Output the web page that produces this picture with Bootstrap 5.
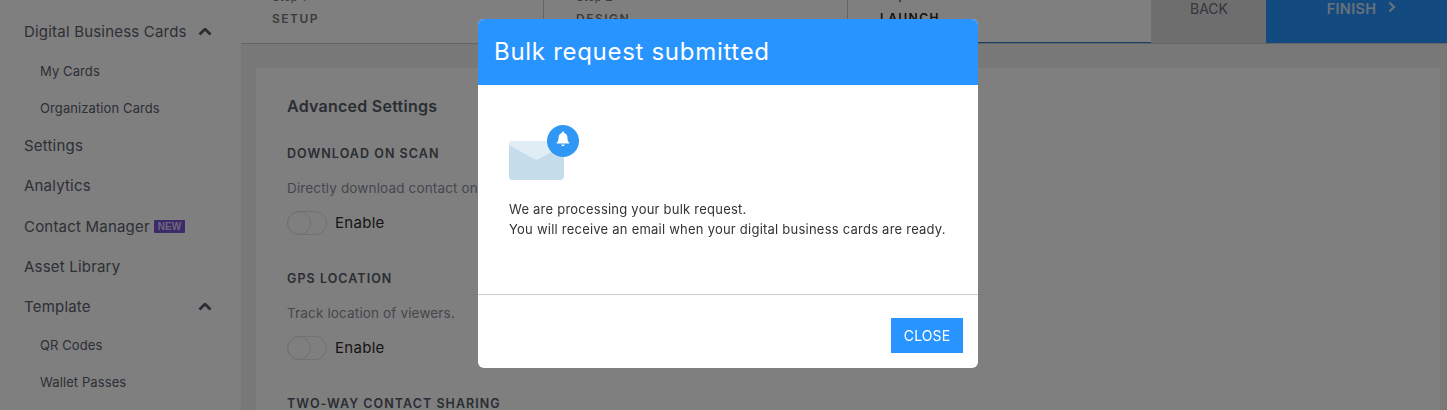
<!DOCTYPE html>
<html lang="en">
<head>
    <meta charset="UTF-8">
    <meta name="viewport" content="width=device-width, initial-scale=1.0">
    <title>Bulk request submitted</title>
    <link href="https://cdn.jsdelivr.net/npm/bootstrap@5.3.0/dist/css/bootstrap.min.css" rel="stylesheet">
    <style>
body {
    height: 410px;
    overflow: hidden;
    background: #f0f0f0;
    font-family: "Inter", "Liberation Sans", sans-serif;
    color: #333;
}

/* sidebar */
.side-bar {
    width: 241px;
    flex: none;
    height: 410px;
    overflow: hidden;
    background: #fff;
    padding-top: 22px;
}
.side-item {
    display: flex;
    align-items: center;
    height: 20px;
    margin: 0 0 20.4px 24px;
    font-size: 15px;
    letter-spacing: .2px;
    color: #5a606b;
    white-space: nowrap;
}
.side-item.has-sub { margin-bottom: 20px; }
.side-item.has-sub.tight { margin-bottom: 18.5px; }
.side-sub + .side-item { margin-top: 1px; }
.side-sub {
    height: 18px;
    line-height: 18px;
    margin: 0 0 19px 40px;
    font-size: 13px;
    letter-spacing: .1px;
    color: #5a606b;
    white-space: nowrap;
}
.side-arrow { margin-left: auto; margin-right: 29px; }
.new-tag {
    background: #7b55d6;
    color: #d9d0f5;
    font-family: "Liberation Sans", sans-serif;
    font-size: 10px;
    font-weight: 700;
    letter-spacing: 0;
    line-height: 13px;
    padding: 0 4px;
    margin-left: 4px;
    border-radius: 1px;
}

/* steps on top */
.steps-bar {
    height: 44px;
    overflow: hidden;
    background: #fff;
    border-bottom: 1px solid #c8c8c8;
}
.step-tab {
    width: 304px;
    height: 43px;
    flex: none;
    display: flex;
    flex-direction: column;
    justify-content: flex-end;
    padding: 0 0 16px 32px;
    border-right: 1px solid #c8c8c8;
    color: #777;
}
.step-tab.first { width: 303px; padding-left: 31px; }
.step-tab.active { width: 303px; color: #222; border-right: 0; border-bottom: 2px solid #2f7fd0; height: 44px; }
.step-no { font-size: 12px; line-height: 16px; margin-bottom: 6px; }
.step-name { font-size: 12px; font-weight: 600; letter-spacing: 1.5px; line-height: 16px; }
.btn-back, .btn-finish {
    height: 43px;
    display: flex;
    justify-content: center;
    padding-top: 1px;
    font-size: 14px;
    line-height: 15px;
}
.btn-back { width: 115px; padding-left: 1px; background: #dcdcdc; color: #666c78; }
.btn-finish { flex: 1; padding-left: 10px; background: #2694fe; color: #cfe3f7; font-weight: 600; font-size: 14.5px; letter-spacing: .3px; gap: 12px; }

/* settings card */
.main-area { padding: 24px 7px 0 15px; }
.settings-card {
    background: #fff;
    padding: 26px 31px 0;
    height: 400px;
    overflow: hidden;
}
.settings-title { font-size: 16px; font-weight: 600; letter-spacing: .25px; color: #555b66; line-height: 24px; margin-bottom: 28px; }
.opt-name { font-size: 12.5px; font-weight: 600; letter-spacing: 1.05px; color: #555b66; line-height: 16px; margin-bottom: 18px; white-space: nowrap; }
.opt-desc { font-size: 13.5px; letter-spacing: .15px; color: #8a8f98; line-height: 16px; margin-bottom: 15px; white-space: nowrap; }
.opt-row { display: flex; align-items: center; height: 24px; font-size: 15px; letter-spacing: .3px; color: #2b2b2b; margin-bottom: 36px; gap: 8px; }
.opt-switch {
    width: 40px;
    height: 24px;
    border: 1px solid #e2e2e2;
    border-radius: 12px;
    position: relative;
}
.opt-switch::before {
    content: "";
    position: absolute;
    left: -1px;
    top: -1px;
    width: 24px;
    height: 24px;
    border: 1px solid #e2e2e2;
    border-radius: 50%;
}

/* modal */
.bulk-dialog { width: 500px; max-width: 500px; margin: 19px 0 0 478px; }
.bulk-content { height: 349px; border: 0; border-radius: 6px; overflow: hidden; }
.bulk-header { background: #2894ff; height: 66px; padding: 0 16px; border: 0; border-radius: 0; }
.bulk-title { color: #fff; font-size: 24px; font-weight: 400; letter-spacing: .7px; }
.bulk-body { padding: 40px 31px 0; height: 209px; flex: none; font-size: 13px; letter-spacing: .23px; line-height: 20px; color: #333; }
.bulk-body svg { display: block; margin-bottom: 19px; }
.bulk-footer { border-top: 1px solid #ccc; padding: 23px 15px 0; display: flex; justify-content: flex-end; align-items: flex-start; border-radius: 0; }
.btn-close-bulk {
    background: #2894ff;
    color: #fff;
    border: 0;
    border-radius: 0;
    width: 72px;
    height: 35px;
    padding: 0;
    margin: 0;
    font-size: 14px;
    letter-spacing: .1px;
}
.btn-close-bulk:hover { background: #2894ff; color: #fff; }
    </style>
</head>
<body>

<div class="d-flex">
    <nav class="side-bar">
        <div class="side-item has-sub">Digital Business Cards
            <svg class="side-arrow" width="14" height="9" viewBox="0 1 14 9"><path d="M1.5 7.5 7 2l5.500 5.500" fill="none" stroke="#555b66" stroke-width="2.800"/></svg>
        </div>
        <div class="side-sub">My Cards</div>
        <div class="side-sub">Organization Cards</div>
        <div class="side-item">Settings</div>
        <div class="side-item">Analytics</div>
        <div class="side-item">Contact Manager <span class="new-tag">NEW</span></div>
        <div class="side-item">Asset Library</div>
        <div class="side-item has-sub tight">Template
            <svg class="side-arrow" width="14" height="9" viewBox="0 1 14 9"><path d="M1.5 7.5 7 2l5.500 5.500" fill="none" stroke="#555b66" stroke-width="2.800"/></svg>
        </div>
        <div class="side-sub">QR Codes</div>
        <div class="side-sub">Wallet Passes</div>
    </nav>

    <div class="flex-grow-1">
        <div class="steps-bar d-flex">
            <div class="step-tab first"><div class="step-no">Step 1</div><div class="step-name">SETUP</div></div>
            <div class="step-tab"><div class="step-no">Step 2</div><div class="step-name">DESIGN</div></div>
            <div class="step-tab active"><div class="step-no">Step 3</div><div class="step-name">LAUNCH</div></div>
            <div class="btn-back">BACK</div>
            <div class="btn-finish">FINISH
                <svg width="8" height="12" viewBox="0 0 8 12"><path d="M1.500 1.500 6 6l-4.500 4.500" fill="none" stroke="#cfe3f7" stroke-width="2.200"/></svg>
            </div>
        </div>
        <div class="main-area">
            <div class="settings-card">
                <div class="settings-title">Advanced Settings</div>
                <div class="opt-name">DOWNLOAD ON SCAN</div>
                <div class="opt-desc">Directly download contact on scan.</div>
                <div class="opt-row"><span class="opt-switch"></span>Enable</div>
                <div class="opt-name">GPS LOCATION</div>
                <div class="opt-desc">Track location of viewers.</div>
                <div class="opt-row"><span class="opt-switch"></span>Enable</div>
                <div class="opt-name">TWO-WAY CONTACT SHARING</div>
            </div>
        </div>
    </div>
</div>

<div class="modal-backdrop show"></div>
<div class="modal d-block">
    <div class="modal-dialog bulk-dialog">
        <div class="modal-content bulk-content">
            <div class="modal-header bulk-header">
                <h5 class="modal-title bulk-title">Bulk request submitted</h5>
            </div>
            <div class="bulk-body">
                <svg width="70" height="55" viewBox="0 0 70 55">
                    <rect x="0" y="16" width="55" height="39" rx="4" fill="#c5dcea"/>
                    <path d="M4 16h47a4 4 0 0 1 4 4L30 34a5 5 0 0 1-5 0L0 20a4 4 0 0 1 4-4z" fill="#e1edf5"/>
                    <circle cx="54" cy="16" r="16" fill="#3197f5"/>
                    <path d="M54 6.500a1.100 1.100 0 0 1 1.100 1.100v.4c2.300.6 3.400 2.600 3.400 4.900 0 2.800.8 4 1.800 4.800v.9H47.700v-.9c1-.8 1.800-2 1.800-4.800 0-2.300 1.100-4.300 3.400-4.900v-.4A1.100 1.100 0 0 1 54 6.500z" fill="#fff"/>
                    <path d="M52.300 19.500h3.400a1.700 1.700 0 0 1-3.400 0z" fill="#fff"/>
                </svg>
                We are processing your bulk request.<br>
                You will receive an email when your digital business cards are ready.
            </div>
            <div class="bulk-footer flex-grow-1">
                <button type="button" class="btn btn-close-bulk">CLOSE</button>
            </div>
        </div>
    </div>
</div>

<script src="https://cdn.jsdelivr.net/npm/bootstrap@5.3.0/dist/js/bootstrap.bundle.min.js"></script>
</body>
</html>
